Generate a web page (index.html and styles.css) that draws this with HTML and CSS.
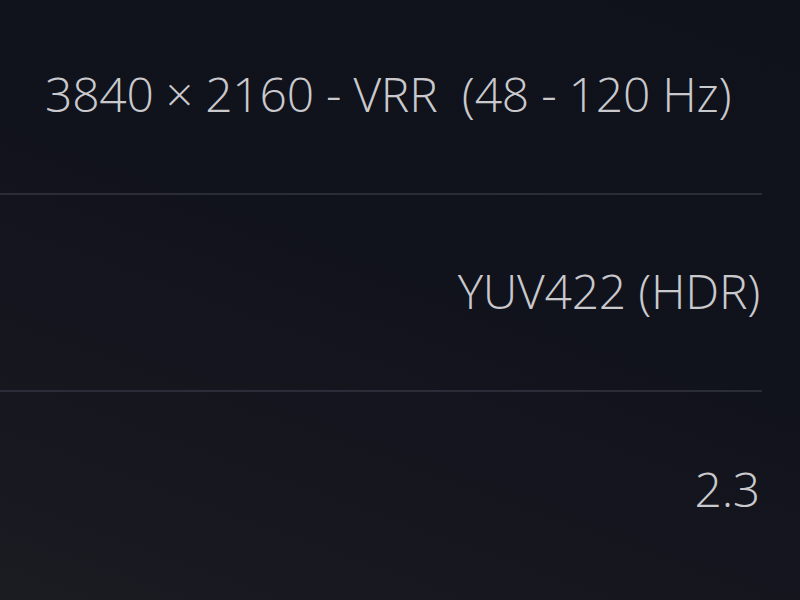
FILE: index.html
```html
<!DOCTYPE html>
<html>
<head>
<meta charset="utf-8">
<link rel="stylesheet" href="styles.css">
</head>
<body>
<div class="list">
  <div class="row row-first">
    <span class="value value-left">3840 × 2160 - VRR&nbsp; (48 - 120 Hz)</span>
  </div>
  <div class="row">
    <span class="value">YUV422 (HDR)</span>
  </div>
  <div class="row row-last">
    <span class="value">2.3</span>
  </div>
</div>
</body>
</html>
```

FILE: styles.css
```css
html, body {
  margin: 0;
  padding: 0;
  width: 800px;
  height: 600px;
  overflow: hidden;
}
body {
  background: linear-gradient(200deg, #0f111b 0%, #11131c 45%, #17171f 80%, #1b1b22 100%);
  font-family: "Open Sans", "Liberation Sans", sans-serif;
  font-weight: 300;
  color: #c9c9cd;
}
.list {
  width: 762px;
  display: flex;
  flex-direction: column;
}
.row {
  display: flex;
  justify-content: flex-end;
  padding: 72px 2px 75px 0;
  border-bottom: 2px solid #2a2c37;
  font-size: 48px;
  line-height: 48px;
  letter-spacing: -0.25px;
}
.row-first {
  justify-content: flex-start;
  padding-top: 70px;
  padding-left: 45px;
}
.row-last {
  border-bottom: none;
  padding-top: 73px;
}
.value {
  white-space: nowrap;
}
```
